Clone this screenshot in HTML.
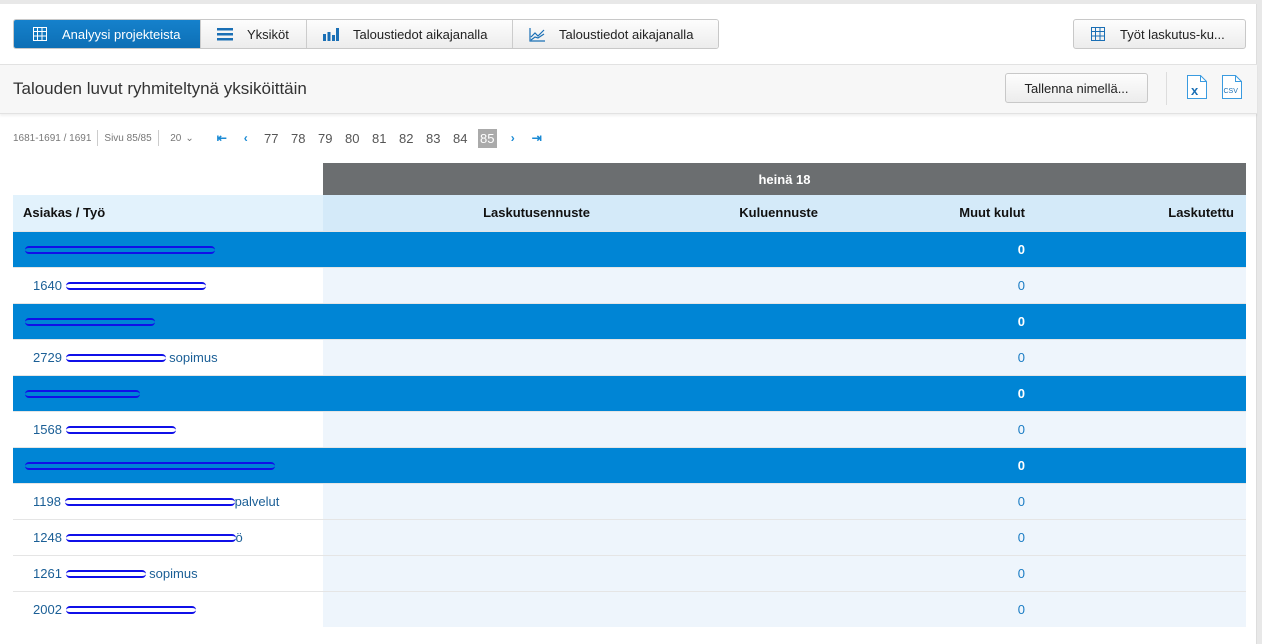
<!DOCTYPE html>
<html><head><meta charset="utf-8"><style>
*{box-sizing:border-box;margin:0;padding:0}
body{width:1262px;height:624px;overflow:hidden;background:#e8e8e8;font-family:"Liberation Sans",sans-serif;font-size:13px;color:#222}
.panel{position:absolute;left:0;top:4px;width:1257px;height:640px;background:#fff;border-right:1px solid #ddd}
.tabs{position:absolute;left:13px;top:19px;height:30px;display:flex;border:1px solid #c8c8c8;border-radius:3px;overflow:hidden}
.tab{height:28px;display:flex;align-items:center;padding:0 16px;background:linear-gradient(#fdfdfd,#ececec);border-right:1px solid #ccc;font-size:13px;color:#222}
.tab:last-child{border-right:none}
.tab.act{background:linear-gradient(#1581cc,#0d6fb5);color:#fff}
.tab svg{margin-right:14px}
.btn{position:absolute;height:30px;border:1px solid #c8c8c8;border-radius:3px;background:linear-gradient(#fdfdfd,#ececec);display:flex;align-items:center;font-size:13px;color:#222}
.bar{position:absolute;left:0;top:64px;width:1257px;height:50px;background:#f7f7f7;border-top:1px solid #e2e2e2;border-bottom:1px solid #e2e2e2;box-shadow:0 2px 2px rgba(0,0,0,.06)}
.title{position:absolute;left:13px;top:79px;font-size:17px;color:#333}
.pag{position:absolute;left:13px;top:130px;display:flex;align-items:center;font-size:10px;color:#777;height:16px}
.pag .n{font-size:13px;color:#555;width:27px;text-align:center}
.pag .b{color:#1a8ad4;font-size:12px;font-weight:bold;width:24px;text-align:center}
.sep{display:inline-block;width:1px;height:16px;background:#ccc;margin:0 6px}
table{position:absolute;left:13px;top:163px;border-collapse:collapse;width:1233px;font-size:13px}
td{height:36px;padding:0 12px}
.hd td{height:32px}
.c0{width:310px}
.c1{width:279px}.c2{width:228px}.c3{width:207px}.c4{width:209px}
.gr{background:#6b6e70;color:#fff;font-weight:bold;text-align:center}
.th td{background:#d4eaf9;font-weight:bold;text-align:right;color:#111}
.th td.c0{background:#e2f2fc;text-align:left;padding-left:10px}
.g td{background:#0085d5;color:#fff;font-weight:bold;border-top:1px solid #e5e5e5}
.w td{background:#eef5fc;color:#1a7cc4;border-top:1px solid #e5e5e5}
.w td.c0{background:#fff;padding-left:20px;color:#1b5f96}
.r{text-align:right}
.sc{display:inline-block;height:8px;vertical-align:middle;border-top:2px solid #1010e8;border-bottom:2px solid #1010e8;border-radius:6px}
</style></head><body>
<div class="panel"></div>
<div class="tabs">
<div class="tab act" style="padding:0 18px 0 18px;width:187px"><svg width="16" height="16" viewBox="0 0 16 16" fill="none" stroke="#fff" stroke-width="1"><rect x="1.5" y="1.5" width="13" height="13"/><path d="M1.5 5.5h13M1.5 10h13M5.5 1.5v13M10 1.5v13"/></svg>Analyysi projekteista</div>
<div class="tab" style="width:106px"><svg width="16" height="14" viewBox="0 0 16 14" fill="#1a6fb5"><rect x="0" y="1" width="16" height="2.5"/><rect x="0" y="6" width="16" height="2.5"/><rect x="0" y="11" width="16" height="2.5"/></svg>Yksiköt</div>
<div class="tab" style="width:206px;padding-left:16px"><svg width="16" height="14" viewBox="0 0 16 14" fill="#1a6fb5"><rect x="0" y="7" width="3" height="7"/><rect x="4.5" y="5" width="3" height="9"/><rect x="9" y="8" width="3" height="6"/><rect x="13" y="1" width="3" height="13"/></svg>Taloustiedot aikajanalla</div>
<div class="tab" style="width:205px;padding-left:16px"><svg width="16" height="15" viewBox="0 0 16 15" fill="none" stroke="#1a6fb5" stroke-width="1.2"><path d="M1 1v13h15M2 10l4-4 3 3 6-6M2 13l4-3 3 1 6-4"/></svg>Taloustiedot aikajanalla</div>
</div>
<div class="btn" style="left:1073px;top:19px;width:173px;padding-left:16px"><svg width="16" height="16" viewBox="0 0 16 16" fill="none" stroke="#1a6fb5" stroke-width="1"><rect x="1.5" y="1.5" width="13" height="13"/><path d="M1.5 5.5h13M1.5 10h13M5.5 1.5v13M10 1.5v13"/></svg><span style="margin-left:14px">Työt laskutus-ku...</span></div>
<div class="bar"></div>
<div class="title">Talouden luvut ryhmiteltynä yksiköittäin</div>
<div class="btn" style="left:1005px;top:73px;width:143px;justify-content:center">Tallenna nimellä...</div>
<div style="position:absolute;left:1166px;top:72px;width:1px;height:33px;background:#ddd"></div>
<svg style="position:absolute;left:1187px;top:75px" width="20" height="24" viewBox="0 0 20 24" fill="#fff" stroke="#3a9be0"><path d="M.5 .5h13l6 6v17H.5z"/><path d="M13.5 .5v6h6" fill="none"/><text x="4" y="20" font-family="Liberation Sans" font-weight="bold" font-size="13" fill="#1a6fb5" stroke="none">x</text></svg>
<svg style="position:absolute;left:1222px;top:75px" width="20" height="24" viewBox="0 0 20 24" fill="#fff" stroke="#3a9be0"><path d="M.5 .5h13l6 6v17H.5z"/><path d="M13.5 .5v6h6" fill="none"/><text x="1.5" y="18" font-family="Liberation Sans" font-size="7" fill="#1a6fb5" stroke="none">CSV</text></svg>
<div class="pag">1681-1691 / 1691<span class="sep"></span>Sivu 85/85<span class="sep"></span>&nbsp;&nbsp;20 <span style="margin:0 16px 0 4px">&#8964;</span>
<span class="b">⇤</span><span class="b">‹</span><span class="n">77</span><span class="n">78</span><span class="n">79</span><span class="n">80</span><span class="n">81</span><span class="n">82</span><span class="n">83</span><span class="n">84</span><span class="n" style="background:#aaa;color:#fff;width:19px;margin:0 4px;line-height:19px">85</span><span class="b">›</span><span class="b">⇥</span></div>
<table>
<tr class="hd"><td class="c0" style="background:#fff"></td><td colspan="4" class="gr">heinä 18</td></tr>
<tr class="th"><td class="c0">Asiakas / Työ</td><td class="c1">Laskutusennuste</td><td class="c2">Kuluennuste</td><td class="c3">Muut kulut</td><td class="c4">Laskutettu</td></tr>
<tr class="g"><td class="c0"><span class="sc" style="width:190px"></span></td><td></td><td></td><td class="r">0</td><td></td></tr>
<tr class="w"><td class="c0">1640 <span class="sc" style="width:140px"></span></td><td></td><td></td><td class="r">0</td><td></td></tr>
<tr class="g"><td class="c0"><span class="sc" style="width:130px"></span></td><td></td><td></td><td class="r">0</td><td></td></tr>
<tr class="w"><td class="c0">2729 <span class="sc" style="width:100px"></span> sopimus</td><td></td><td></td><td class="r">0</td><td></td></tr>
<tr class="g"><td class="c0"><span class="sc" style="width:115px"></span></td><td></td><td></td><td class="r">0</td><td></td></tr>
<tr class="w"><td class="c0">1568 <span class="sc" style="width:110px"></span></td><td></td><td></td><td class="r">0</td><td></td></tr>
<tr class="g"><td class="c0"><span class="sc" style="width:250px"></span></td><td></td><td></td><td class="r">0</td><td></td></tr>
<tr class="w"><td class="c0">1198 <span class="sc" style="width:170px"></span>palvelut</td><td></td><td></td><td class="r">0</td><td></td></tr>
<tr class="w"><td class="c0">1248 <span class="sc" style="width:170px"></span>ö</td><td></td><td></td><td class="r">0</td><td></td></tr>
<tr class="w"><td class="c0">1261 <span class="sc" style="width:80px"></span> sopimus</td><td></td><td></td><td class="r">0</td><td></td></tr>
<tr class="w"><td class="c0">2002 <span class="sc" style="width:130px"></span></td><td></td><td></td><td class="r">0</td><td></td></tr>
</table>
</body></html>
